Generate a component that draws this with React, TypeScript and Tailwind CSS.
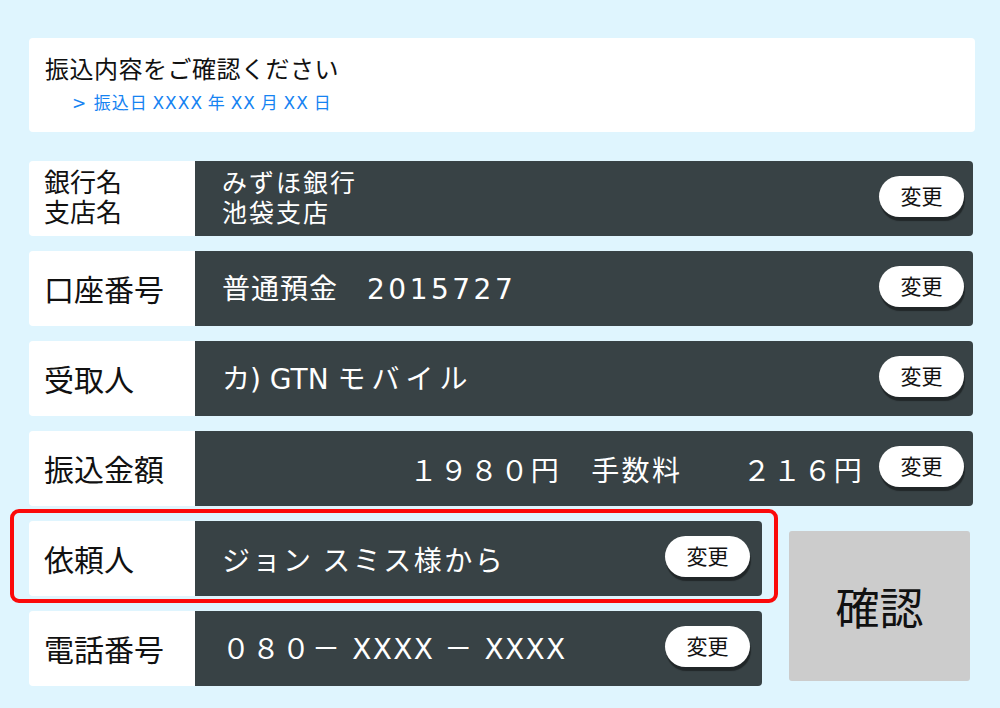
import type React from "react"

const font = { fontFamily: '"Noto Sans CJK JP", "Noto Sans", sans-serif' }

interface RowProps {
  label: React.ReactNode
  children: React.ReactNode
  btnRight?: string
}

function ChangeButton() {
  return (
    <div className="mb-[5px] flex h-[41px] w-[85px] shrink-0 items-center justify-center rounded-full bg-white text-[21px] text-[#111] shadow-[1px_4px_1px_rgba(0,0,0,0.42)]">
      変更
    </div>
  )
}

function Row({ label, children, btnRight = "pr-[9px]" }: RowProps) {
  return (
    <div className="flex h-[75px]">
      <div className="flex w-[166px] shrink-0 items-center rounded-l-[4px] bg-white pl-[15px] text-[30px] text-[#111]">
        {label}
      </div>
      <div className={`flex flex-1 items-center rounded-r-[4px] bg-[#384245] pl-[27px] text-white ${btnRight}`}>
        <div className="min-w-0 flex-1">{children}</div>
        <ChangeButton />
      </div>
    </div>
  )
}

export default function App() {
  return (
    <div className="h-[708px] w-full bg-[#dff5fe] pl-[29px] pt-[38px]" style={font}>
      <div className="h-[94px] w-[946px] rounded-[4px] bg-white pl-[16px] pt-[15px]">
        <div className="text-[24px] leading-[30px] tracking-[0.5px] text-[#111]">振込内容をご確認ください</div>
        <div className="ml-[27px] mt-[9px] text-[17px] leading-[20px] tracking-[1px] text-[#1683f2]">
          <span className="font-[DejaVu_Sans]">&gt; </span>振込日 <span className="font-[DejaVu_Sans]">XXXX</span> 年{" "}
          <span className="font-[DejaVu_Sans]">XX</span> 月 <span className="font-[DejaVu_Sans]">XX</span> 日
        </div>
      </div>

      <div className="mt-[29px] flex w-[944px] flex-col gap-[15px]">
        <Row
          label={
            <div className="pb-[5px] text-[26px] leading-[30px]">
              銀行名
              <br />
              支店名
            </div>
          }
        >
          <div className="pb-[5px] text-[25px] leading-[30px] tracking-[2px]">
            みずほ銀行
            <br />
            池袋支店
          </div>
        </Row>

        <Row label="口座番号">
          <div className="text-[28px] tracking-[1px]">
            普通預金　<span className="font-[DejaVu_Sans] tracking-[3.5px]">2015727</span>
          </div>
        </Row>

        <Row label="受取人">
          <div className="text-[28px]">
            カ<span className="font-[DejaVu_Sans]">) GTN </span>
            <span className="tracking-[6px]">モバイル</span>
          </div>
        </Row>

        <Row label="振込金額">
          <div className="pr-[15px] text-right text-[28px] tracking-[2.3px]">１９８０円　手数料　　２１６円</div>
        </Row>

        <div className="flex gap-[27px]">
          <div className="flex w-[733px] flex-col gap-[15px]">
            <div className="relative">
              <Row label="依頼人" btnRight="pr-[12px]">
                <div className="text-[28px] tracking-[2.5px]">ジョン スミス様から</div>
              </Row>
              <div className="pointer-events-none absolute -bottom-[7px] -left-[19px] -right-[16px] -top-[12px] rounded-[9px] border-4 border-[#fb0a0a]" />
            </div>
            <Row label="電話番号" btnRight="pr-[12px]">
              <div className="text-[28px] tracking-[2px]">
                ０８０－<span className="font-[DejaVu_Sans] tracking-[1.3px]"> XXXX </span>－
                <span className="font-[DejaVu_Sans] tracking-[1.3px]"> XXXX</span>
              </div>
            </Row>
          </div>
          <div className="mt-[10px] flex h-[150px] w-[181px] items-center justify-center rounded-[3px] bg-[#cccccc] text-[44px] text-[#111]">
            確認
          </div>
        </div>
      </div>
    </div>
  )
}
